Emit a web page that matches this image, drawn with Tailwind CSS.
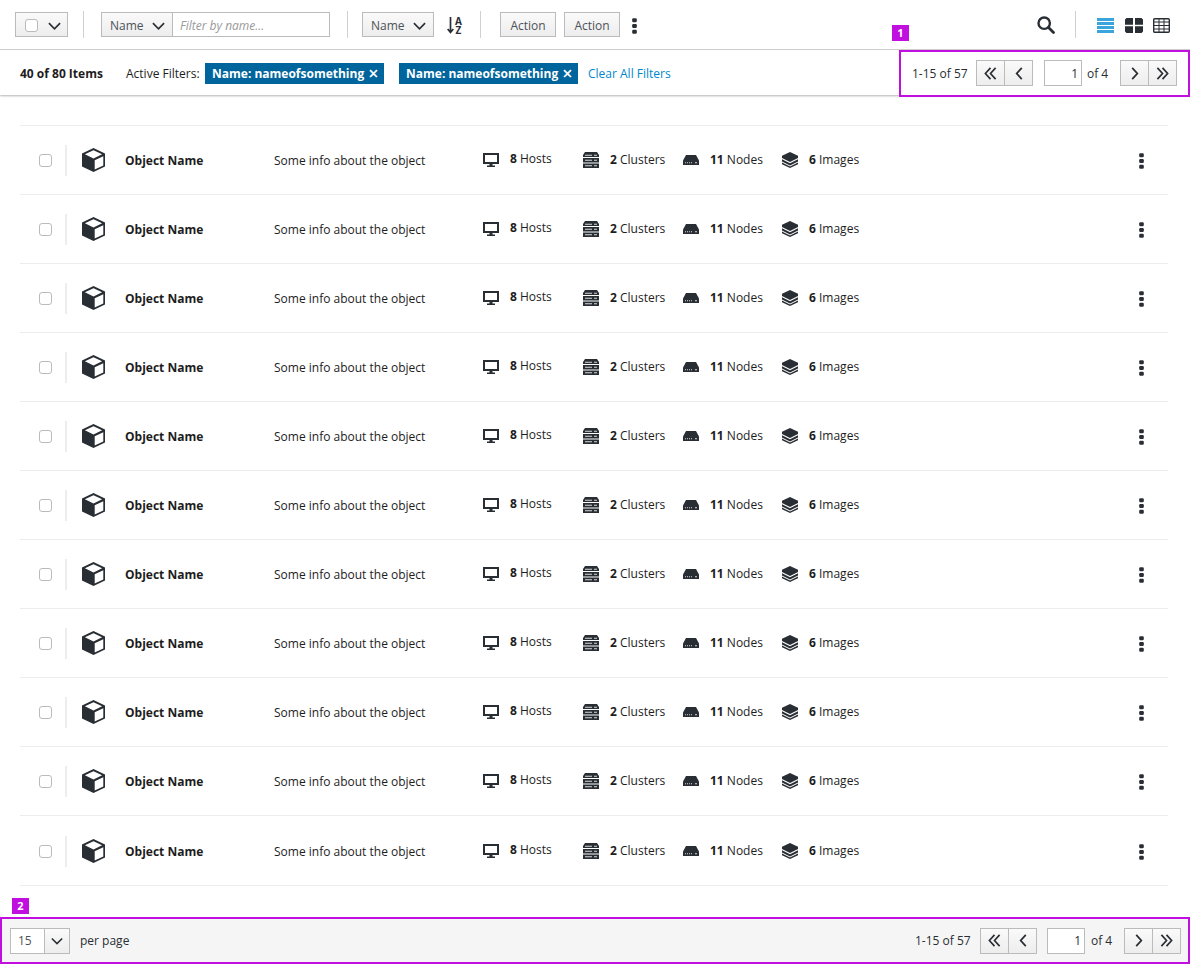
<!doctype html>
<html>
  <head>
    <meta charset="UTF-8" />
    <title>List view</title>
    <script src="https://cdn.jsdelivr.net/npm/@tailwindcss/browser@4"></script>
  </head>

  <body class="bg-white font-['Open_Sans',sans-serif] text-[12px] leading-[16px] text-[#1d1d1d]">
    <svg class="hidden">
      <symbol id="chev-down" viewBox="0 0 14 8"><path d="M1 1l6 6 6-6" fill="none" stroke="currentColor" stroke-width="1.8" /></symbol>
      <symbol id="chev-left" viewBox="0 0 8 14"><path d="M7 1L1.500 7 7 13" fill="none" stroke="currentColor" stroke-width="1.900" /></symbol>
      <symbol id="chev-right" viewBox="0 0 8 14"><path d="M1 1l5.500 6L1 13" fill="none" stroke="currentColor" stroke-width="1.900" /></symbol>
      <symbol id="dbl-left" viewBox="0 0 14 14"><path d="M7 1L1.500 7 7 13M12.500 1L7 7l5.500 6" fill="none" stroke="currentColor" stroke-width="1.800" /></symbol>
      <symbol id="dbl-right" viewBox="0 0 14 14"><path d="M1.500 1L7 7l-5.500 6M7 1l5.500 6L7 13" fill="none" stroke="currentColor" stroke-width="1.800" /></symbol>
      <symbol id="kebab" viewBox="0 0 5 16"><rect x=".2" y=".3" width="4.600" height="4" rx="1.200" /><rect x=".2" y="6" width="4.600" height="4" rx="1.200" /><rect x=".2" y="11.700" width="4.600" height="4" rx="1.200" /></symbol>
      <symbol id="cube" viewBox="0 0 24 24">
        <path fill="#292e34" d="M12 0l11.500 5.500v13L12 24 .5 18.500v-13z" />
        <path fill="#fff" d="M12 2.200L20.600 6.300 12 10.400 3.400 6.300zM13.200 12.200l8.600-4v9.200l-8.600 4.200z" />
      </symbol>
      <symbol id="monitor" viewBox="0 0 16 14">
        <path fill="#292e34" d="M0 0h16v11H9.500v1.500H12V14H4v-1.500h2.500V11H0zm2 2v7h12V2z" />
      </symbol>
      <symbol id="server" viewBox="0 0 16 16">
        <path fill="#292e34" d="M2 0h12l2 3v2H0V3zM0 6h16v4.500H0zM0 11.500h16V16H0z" />
        <path fill="#d8d8d8" d="M2 2.800h7v1H2zM2 7.800h7v1H2zM2 13.300h7v1H2zM11 2.800h3v1h-3zM11 7.800h3v1h-3zM11 13.300h3v1h-3z" />
      </symbol>
      <symbol id="node" viewBox="0 0 16 10">
        <path fill="#292e34" d="M3 0h10l3 5.500V10H0V5.500z" />
        <path fill="#d8d8d8" d="M2 7.300h1v1H2zM4 7.300h1v1H4zM6 7.300h1v1H6zM8 7.300h1v1H8zM12 7.300h2v1h-2z" />
      </symbol>
      <symbol id="layers" viewBox="0 0 16 16">
        <path fill="#292e34" d="M8 0l8 3.800v8.400L8 16l-8-3.800V3.800z" />
        <path fill="#fff" d="M0 6l8 4 8-4v1.200l-8 4-8-4zM0 9.400l8 4 8-4v1.200l-8 4-8-4z" />
      </symbol>
    </svg>

    <div class="relative h-[964px] w-[1190px] overflow-hidden">
      <!-- toolbar -->
      <div class="flex h-[50px] items-center border-b border-[#d1d1d1] pl-[15px] text-[#4d5258]">
        <div class="flex h-[25px] w-[53px] items-center gap-[10px] border border-[#bbb] bg-linear-to-b from-[#fafafa] to-[#ededed] pt-[2px] pl-[9px]">
          <span class="h-[13px] w-[13px] rounded-[3px] border border-[#bbb] bg-white"></span>
          <svg class="h-[8px] w-[13px] text-[#292e34]"><use href="#chev-down" /></svg>
        </div>
        <div class="ml-[15px] h-[27px] w-px bg-[#d1d1d1]"></div>
        <div class="ml-[17px] flex h-[25px] w-[72px] items-center justify-between border border-[#bbb] bg-linear-to-b from-[#fafafa] to-[#ededed] pt-[2px] pr-[7px] pl-[8px]">
          Name
          <svg class="h-[8px] w-[13px] text-[#292e34]"><use href="#chev-down" /></svg>
        </div>
        <div class="flex h-[25px] w-[157px] items-center border border-l-0 border-[#bbb] bg-white pt-[2px] pl-[7px] text-[#999] italic">Filter by name...</div>
        <div class="ml-[17px] h-[27px] w-px bg-[#d1d1d1]"></div>
        <div class="ml-[14px] flex h-[25px] w-[72px] items-center justify-between border border-[#bbb] bg-linear-to-b from-[#fafafa] to-[#ededed] pt-[2px] pr-[7px] pl-[8px]">
          Name
          <svg class="h-[8px] w-[13px] text-[#292e34]"><use href="#chev-down" /></svg>
        </div>
        <div class="ml-[13px] flex w-[18px] items-center gap-[1px] pt-[2px]">
          <svg class="h-[17px] w-[7px] text-[#292e34]" viewBox="0 0 7 17"><path d="M3.500 0v15M.7 12l2.800 3.500L6.300 12" fill="none" stroke="currentColor" stroke-width="1.700" /></svg>
          <div class="text-center text-[10px] leading-[9px] font-bold text-[#292e34]">A<br />Z</div>
        </div>
        <div class="ml-[15px] h-[27px] w-px bg-[#d1d1d1]"></div>
        <div class="ml-[19px] flex h-[25px] w-[56px] items-center justify-center border border-[#bbb] bg-linear-to-b from-[#fafafa] to-[#ededed] pt-[2px]">Action</div>
        <div class="ml-[8px] flex h-[25px] w-[56px] items-center justify-center border border-[#bbb] bg-linear-to-b from-[#fafafa] to-[#ededed] pt-[2px]">Action</div>
        <svg class="ml-[12px] h-[16px] w-[5px] translate-y-px fill-[#292e34]"><use href="#kebab" /></svg>
        <svg class="ml-[400px] h-[18px] w-[18px] text-[#292e34]" viewBox="0 0 18 18"><circle cx="7.200" cy="7.200" r="5.700" fill="none" stroke="currentColor" stroke-width="2.400" /><path d="M11.500 11.500l5 5" stroke="currentColor" stroke-width="2.800" stroke-linecap="round" /></svg>
        <div class="ml-[20px] h-[27px] w-px bg-[#d1d1d1]"></div>
        <svg class="ml-[21px] h-[15px] w-[17px] translate-y-px" viewBox="0 0 17 15"><path fill="#39a5dc" d="M0 0h17v3H0zM0 4h17v3H0zM0 8h17v3H0zM0 12h17v3H0z" /></svg>
        <svg class="ml-[11px] h-[15px] w-[18px] translate-y-px" viewBox="0 0 18 15"><path fill="#292e34" d="M1.500 0H8v6.800H0V1.500zM10 0h6.500L18 1.500v5.300h-8zM0 8.200h8V15H1.500L0 13.500zM10 8.200h8v5.300L16.500 15H10z" /></svg>
        <svg class="ml-[10px] h-[15px] w-[17px] translate-y-px" viewBox="0 0 17 15"><rect x=".7" y=".7" width="15.600" height="13.600" rx="1" fill="none" stroke="#292e34" stroke-width="1.400" /><path d="M0 4h17M0 7.500h17M0 11h17M6 0v15M11 0v15" stroke="#292e34" fill="none" /></svg>
      </div>

      <!-- filter results -->
      <div class="flex h-[45px] items-center pt-px pl-[20px] shadow-[0_1px_2px_rgba(0,0,0,0.3)]">
        <span class="w-[106px] translate-y-px font-bold">40 of 80 Items</span>
        <span class="w-[79px] translate-y-px">Active Filters:</span>
        <span class="flex h-[21px] w-[179px] items-center gap-[4px] bg-[#00659c] pt-[2px] pl-[7px] font-bold text-white">Name: nameofsomething <span class="-translate-y-px text-[18px] leading-[16px] font-semibold">×</span></span>
        <span class="ml-[15px] flex h-[21px] w-[179px] items-center gap-[4px] bg-[#00659c] pt-[2px] pl-[7px] font-bold text-white">Name: nameofsomething <span class="-translate-y-px text-[18px] leading-[16px] font-semibold">×</span></span>
        <a class="ml-[10px] translate-y-px text-[#0088ce]">Clear All Filters</a>
        <div class="ml-auto flex items-center pr-[13px] text-[#292e34]">
          <span class="w-[64px] translate-y-px">1-15 of 57</span>
          <div class="flex h-[26px] w-[57px] border border-[#bbb] bg-linear-to-b from-[#fafafa] to-[#ededed]">
            <span class="flex w-[28px] items-center justify-center border-r border-[#bbb]"><svg class="h-[13px] w-[13px]"><use href="#dbl-left" /></svg></span>
            <span class="flex flex-1 items-center justify-center"><svg class="h-[13px] w-[8px]"><use href="#chev-left" /></svg></span>
          </div>
          <span class="ml-[11px] flex h-[26px] w-[38px] items-center justify-end border border-[#bbb] bg-white pt-[2px] pr-[3px]">1</span>
          <span class="w-[38px] translate-y-px pl-[5px]">of 4</span>
          <div class="flex h-[26px] w-[57px] border border-[#bbb] bg-linear-to-b from-[#fafafa] to-[#ededed]">
            <span class="flex w-[28px] items-center justify-center border-r border-[#bbb]"><svg class="h-[13px] w-[8px]"><use href="#chev-right" /></svg></span>
            <span class="flex flex-1 items-center justify-center"><svg class="h-[13px] w-[13px]"><use href="#dbl-right" /></svg></span>
          </div>
        </div>
      </div>

      <!-- list -->
      <div id="list" class="mx-[20px] mt-[30px] w-[1148px] border-b border-[#ededed]">
        <template id="row-tpl">
          <div class="flex h-[69px] items-center border-t border-[#ededed] last:h-[70px] last:pt-px">
            <span class="ml-[19px] h-[13px] w-[13px] rounded-[3px] border border-[#bbb] bg-white"></span>
            <span class="ml-[13px] h-[31px] w-[2px] bg-[#ededed]"></span>
            <svg class="ml-[14px] h-[24px] w-[25px]"><use href="#cube" /></svg>
            <span class="ml-[19px] w-[149px] translate-y-px font-bold">Object Name</span>
            <span class="w-[209px] translate-y-px">Some info about the object</span>
            <div class="flex w-[100px] items-center">
              <svg class="h-[14px] w-[16px]"><use href="#monitor" /></svg>
              <span class="ml-[11px] -translate-y-px"><b>8</b> Hosts</span>
            </div>
            <div class="flex w-[100px] items-center">
              <svg class="h-[16px] w-[16px]"><use href="#server" /></svg>
              <span class="ml-[11px]"><b>2</b> Clusters</span>
            </div>
            <div class="flex w-[99px] items-center">
              <svg class="h-[10px] w-[16px]"><use href="#node" /></svg>
              <span class="ml-[11px]"><b>11</b> Nodes</span>
            </div>
            <div class="flex w-[357px] items-center">
              <svg class="h-[16px] w-[16px]"><use href="#layers" /></svg>
              <span class="ml-[11px]"><b>6</b> Images</span>
            </div>
            <svg class="h-[16px] w-[5px] translate-y-px fill-[#292e34]"><use href="#kebab" /></svg>
          </div>
        </template>
      </div>

      <!-- footer pagination -->
      <div class="mt-[31px] flex h-[47px] items-center justify-between bg-[#f5f5f5] pr-[9px] pl-[10px]">
        <div class="flex items-center text-[#292e34]">
          <div class="flex h-[26px] w-[60px] border border-[#bbb] bg-white">
            <span class="flex w-[33px] items-center pl-[7px] text-[#4d5258]">15</span>
            <span class="flex flex-1 items-center justify-center border-l border-[#bbb] bg-linear-to-b from-[#fafafa] to-[#ededed]"><svg class="h-[8px] w-[12px]"><use href="#chev-down" /></svg></span>
          </div>
          <span class="ml-[10px]">per page</span>
        </div>
        <div class="flex items-center text-[#292e34]">
          <span class="w-[65px]">1-15 of 57</span>
          <div class="flex h-[26px] w-[57px] border border-[#bbb] bg-linear-to-b from-[#fafafa] to-[#ededed]">
            <span class="flex w-[28px] items-center justify-center border-r border-[#bbb]"><svg class="h-[13px] w-[13px]"><use href="#dbl-left" /></svg></span>
            <span class="flex flex-1 items-center justify-center"><svg class="h-[13px] w-[8px]"><use href="#chev-left" /></svg></span>
          </div>
          <span class="ml-[10px] flex h-[26px] w-[38px] items-center justify-end border border-[#bbb] bg-white pr-[3px]">1</span>
          <span class="w-[39px] pl-[6px]">of 4</span>
          <div class="flex h-[26px] w-[57px] border border-[#bbb] bg-linear-to-b from-[#fafafa] to-[#ededed]">
            <span class="flex w-[28px] items-center justify-center border-r border-[#bbb]"><svg class="h-[13px] w-[8px]"><use href="#chev-right" /></svg></span>
            <span class="flex flex-1 items-center justify-center"><svg class="h-[13px] w-[13px]"><use href="#dbl-right" /></svg></span>
          </div>
        </div>
      </div>

      <!-- annotations -->
      <div class="absolute top-[25px] left-[892px] flex h-[16px] w-[17px] items-center justify-center bg-[#c10fe0] text-[11px] font-bold text-white">1</div>
      <div class="absolute top-[50px] left-[899px] h-[47px] w-[291px] border-2 border-[#c10fe0]"></div>
      <div class="absolute top-[898px] left-[12px] flex h-[16px] w-[17px] items-center justify-center bg-[#c10fe0] text-[11px] font-bold text-white">2</div>
      <div class="absolute top-[917px] left-0 h-[47px] w-[1190px] border-2 border-[#c10fe0]"></div>
    </div>

    <script>
      const list = document.getElementById("list");
      const tpl = document.getElementById("row-tpl");
      for (let i = 0; i < 11; i++) list.appendChild(tpl.content.cloneNode(true));
      tpl.remove();
    </script>
  </body>
</html>
